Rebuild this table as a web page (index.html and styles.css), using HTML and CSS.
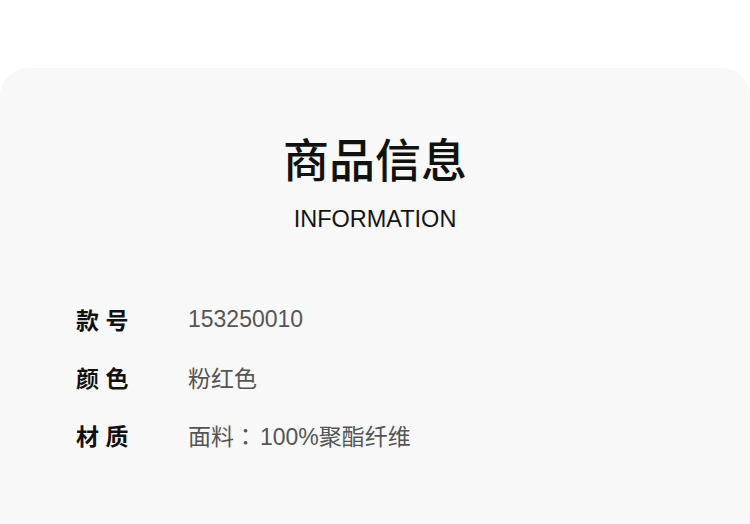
FILE: index.html
```html
<!DOCTYPE html>
<html lang="zh-CN">
<head>
    <meta charset="UTF-8">
    <meta name="viewport" content="width=device-width, initial-scale=1.0">
    <title>商品信息</title>
    <link rel="stylesheet" href="styles.css">
</head>
<body>
    <div class="info-card">
        <h1 class="info-title">商品信息</h1>
        <div class="info-subtitle">INFORMATION</div>

        <div class="info-list">
            <div class="info-row">
                <div class="info-label">款 号</div>
                <div class="info-value">153250010</div>
            </div>
            <div class="info-row">
                <div class="info-label">颜 色</div>
                <div class="info-value">粉红色</div>
            </div>
            <div class="info-row">
                <div class="info-label">材 质</div>
                <div class="info-value">面料<span class="colon" lang="zh-TW">：</span>100%聚酯纤维</div>
            </div>
        </div>
    </div>
</body>
</html>
```

FILE: styles.css
```css
:root {
    --card-bg: #f8f8f8;
    --text-dark: #111111;
    --text-muted: #555555;
    --radius: 28px;
}
* { margin: 0; padding: 0; box-sizing: border-box; }
body { background-color: #ffffff; font-family: 'Liberation Sans', 'Noto Sans CJK SC', sans-serif; color: var(--text-dark); overflow: hidden; }
.info-card { margin-top: 68px; background-color: var(--card-bg); border-radius: var(--radius) var(--radius) 0 0; padding-top: 70px; height: calc(100vh - 68px); }
.info-title { text-align: center; font-size: 46px; line-height: 46px; font-weight: 500; color: #111; }
.info-subtitle { text-align: center; font-size: 23.5px; line-height: 23px; margin-top: 24px; color: #151515; }
.info-list { margin-top: 59px; padding-left: 76px; }
.info-row { display: grid; grid-template-columns: 112px auto; align-items: center; height: 58px; }
.info-label { font-size: 23px; font-weight: 700; color: var(--text-dark); }
.info-value { font-size: 23px; color: var(--text-muted); }
.colon { display: inline-block; width: 23px; margin-right: 3px; font-family: 'Noto Sans CJK TC', sans-serif; text-align: center; }
```
